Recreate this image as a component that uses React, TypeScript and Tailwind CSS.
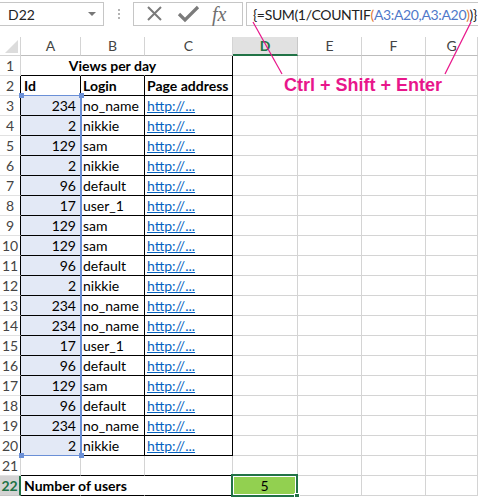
import React from "react";

const DATA: [number, string][] = [
  [234, "no_name"],
  [2, "nikkie"],
  [129, "sam"],
  [2, "nikkie"],
  [96, "default"],
  [17, "user_1"],
  [129, "sam"],
  [129, "sam"],
  [96, "default"],
  [2, "nikkie"],
  [234, "no_name"],
  [234, "no_name"],
  [17, "user_1"],
  [96, "default"],
  [129, "sam"],
  [96, "default"],
  [234, "no_name"],
  [2, "nikkie"],
];

const COLS = ["A", "B", "C", "D", "E", "F", "G"];
const GRID = "grid grid-cols-[21px_60px_64px_88px_65px_64px_64px_1fr] grid-rows-[20px] h-[20px]";
const FONT = { fontFamily: "Lato, 'Liberation Sans', sans-serif" };

function Toolbar() {
  return (
    <div className="h-[37px] flex items-start pt-[2px] bg-white">
      <div className="shrink-0 w-[104px] h-[24px] border border-[#c6c6c6] border-l-0 flex items-center pl-[8px] pr-[7px] text-[14px] text-[#222]">
        <span className="flex-1">D22</span>
        <span className="w-0 h-0 border-l-[4px] border-r-[4px] border-t-[4px] border-l-transparent border-r-transparent border-t-[#777]" />
      </div>
      <div className="shrink-0 w-[29px] h-[24px] flex flex-col items-center justify-center gap-[2px]">
        <span className="w-[2px] h-[2px] bg-[#b4b4b4]" />
        <span className="w-[2px] h-[2px] bg-[#b4b4b4]" />
        <span className="w-[2px] h-[2px] bg-[#b4b4b4]" />
      </div>
      <div className="shrink-0 w-[110px] h-[24px] border border-[#c6c6c6] flex items-center">
        <svg width="36" height="22" viewBox="0 0 36 22" className="ml-[2px]">
          <path d="M12 4 L25 17 M25 4 L12 17" stroke="#7b7b7b" strokeWidth="2" fill="none" />
        </svg>
        <svg width="34" height="22" viewBox="0 0 34 22">
          <path d="M7 11 L13 17 L26 4" stroke="#7b7b7b" strokeWidth="3.2" fill="none" />
        </svg>
        <span className="ml-[6px] text-[20px] italic text-[#6f6f6f] leading-none" style={{ fontFamily: "'Liberation Serif', serif" }}>
          fx
        </span>
      </div>
      <div className="shrink-0 w-[3px]" />
      <div className="flex-1 min-w-0 h-[24px] border border-[#c6c6c6] border-r-0 flex items-center pl-[6px] text-[14px] tracking-[-0.35px] text-[#222] whitespace-nowrap overflow-hidden">
        <span>{"{=SUM(1/COUNTIF"}</span>
        <span className="text-[#e0783a]">(</span>
        <span className="text-[#4f78c9]">A3:A20,A3:A20</span>
        <span className="text-[#e0783a]">)</span>
        <span>{")}"}</span>
      </div>
    </div>
  );
}

function HeaderRow() {
  return (
    <div className="grid grid-cols-[21px_60px_64px_88px_65px_64px_64px_1fr] grid-rows-[19px] h-[19px]">
      <div className="border-r border-b border-[#d4d4d4] relative bg-white">
        <svg className="absolute left-[5px] top-[3px]" width="13" height="13" viewBox="0 0 13 13">
          <path d="M13 0 L13 13 L0 13 Z" fill="#dcdcdc" />
        </svg>
      </div>
      {COLS.map((c) =>
        c === "D" ? (
          <div key={c} className="bg-[#e1e1e1] border-r border-[#c8c8c8] border-b-2 border-b-[#217346] flex items-center justify-center text-[14px] leading-none text-[#217346] font-bold">
            {c}
          </div>
        ) : (
          <div key={c} className="bg-white border-r border-b border-[#d4d4d4] border-b-[#bdbdbd] flex items-center justify-center text-[14px] leading-none text-[#444]">
            {c}
          </div>
        )
      )}
    </div>
  );
}

function Cell({
  children,
  right = "g",
  bottom = "g",
  className = "",
}: {
  children?: React.ReactNode;
  right?: "g" | "k" | "n";
  bottom?: "g" | "k";
  className?: string;
}) {
  const r = right === "k" ? "border-r-black" : right === "n" ? "border-r-transparent" : "border-r-[#d4d4d4]";
  const b = bottom === "k" ? "border-b-black" : "border-b-[#d4d4d4]";
  return (
    <div className={`border-r border-b ${r} ${b} flex items-center overflow-visible whitespace-nowrap text-[14px] leading-none text-black ${className}`}>
      {children}
    </div>
  );
}

function RowHead({ n, edge }: { n: number; edge: "g" | "k" | "sel" }) {
  if (edge === "sel") {
    return (
      <div className="bg-[#d3d3d3] border-r-2 border-r-[#217346] border-b border-b-[#c6c6c6] flex items-center justify-center text-[14px] leading-none font-bold text-[#217346]">
        {n}
      </div>
    );
  }
  return (
    <div className={`bg-white border-r border-b border-b-[#e1e1e1] ${edge === "k" ? "border-r-black" : "border-r-[#d4d4d4]"} flex items-center justify-center text-[14px] leading-none text-[#444]`}>
      {n}
    </div>
  );
}

function Blank() {
  return (
    <>
      <Cell />
      <Cell />
      <Cell />
      <Cell />
    </>
  );
}

export default function App() {
  return (
    <div className="w-[478px] h-[497px] overflow-hidden bg-white relative" style={FONT}>
      <Toolbar />
      <div className="relative">
        <HeaderRow />
        {/* row 1 */}
        <div className={GRID}>
          <RowHead n={1} edge="g" />
          <Cell right="n" bottom="k" />
          <Cell right="n" bottom="k" className="justify-center font-bold">
            Views per day
          </Cell>
          <Cell right="k" bottom="k" />
          <Blank />
        </div>
        {/* row 2 */}
        <div className={GRID}>
          <RowHead n={2} edge="k" />
          <Cell right="k" bottom="k" className="pl-[3px] font-bold">Id</Cell>
          <Cell right="k" bottom="k" className="pl-[2px] font-bold">Login</Cell>
          <Cell right="k" bottom="k" className="pl-[2px] font-bold">Page address</Cell>
          <Blank />
        </div>
        {DATA.map(([id, login], i) => (
          <div key={i} className={GRID}>
            <RowHead n={i + 3} edge="k" />
            <Cell right="k" bottom="k" className="justify-end pr-[4px] bg-[#e3e9f6]">{id}</Cell>
            <Cell right="k" bottom="k" className="pl-[2px]">{login}</Cell>
            <Cell right="k" bottom="k" className="pl-[2px]">
              <span className="text-[#0563c1] underline">http://...</span>
            </Cell>
            <Blank />
          </div>
        ))}
        {/* row 21 */}
        <div className={GRID}>
          <RowHead n={21} edge="g" />
          <Cell bottom="k" />
          <Cell bottom="k" />
          <Cell bottom="k" />
          <Blank />
        </div>
        {/* row 22 */}
        <div className={GRID}>
          <RowHead n={22} edge="sel" />
          <Cell right="n" bottom="k" className="pl-[3px] font-bold">Number of users</Cell>
          <Cell right="n" bottom="k" />
          <Cell right="k" bottom="k" />
          <div className="relative border-r border-b border-[#d4d4d4]">
            <div className="absolute -left-[2px] -top-[2px] w-[67px] h-[23px] border-2 border-[#217346] z-10">
              <div className="w-full h-full border border-white bg-[#92d050] flex items-center justify-center text-[14px] leading-none text-black">
                5
              </div>
              <div className="absolute -right-[4px] -bottom-[4px] w-[6px] h-[6px] bg-[#217346] border border-white" />
            </div>
          </div>
          <Cell />
          <Cell />
          <Cell />
        </div>

        {/* reference highlight A3:A20 */}
        <div className="absolute left-[21px] top-[58px] w-[61px] h-[361px] border border-[#6a8fd6] border-l-0 border-r-2 pointer-events-none">
          <div className="absolute -left-[2px] -top-[3px] w-[5px] h-[5px] bg-[#6a8fd6]" />
          <div className="absolute -right-[4px] -top-[3px] w-[5px] h-[5px] bg-[#6a8fd6]" />
          <div className="absolute -left-[2px] -bottom-[3px] w-[5px] h-[5px] bg-[#6a8fd6]" />
          <div className="absolute -right-[4px] -bottom-[3px] w-[5px] h-[5px] bg-[#6a8fd6]" />
        </div>
      </div>

      {/* annotation */}
      <svg className="absolute left-0 top-0 pointer-events-none" width="478" height="497" viewBox="0 0 478 497">
        <line x1="253" y1="22" x2="282" y2="74" stroke="#e8168b" strokeWidth="1.2" />
        <line x1="471" y1="22" x2="445" y2="74" stroke="#e8168b" strokeWidth="1.2" />
      </svg>
      <div
        className="absolute left-[284px] top-[76px] text-[18px] font-bold text-[#e8168b] whitespace-nowrap leading-none"
        style={{ fontFamily: "'Liberation Sans', Arial, sans-serif" }}
      >
        Ctrl + Shift + Enter
      </div>
    </div>
  );
}
